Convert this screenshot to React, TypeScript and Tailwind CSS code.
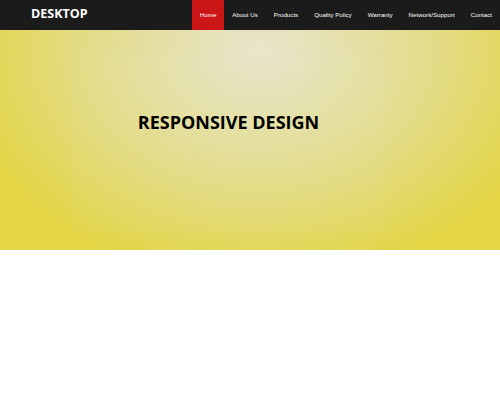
const navItems = [
  "Home",
  "About Us",
  "Products",
  "Quality Policy",
  "Warranty",
  "Network/Support",
  "Contact",
];

export default function App() {
  return (
    <div className="w-[500px] h-[400px] bg-white">
      <header className="flex h-[30px] items-stretch justify-between bg-[#1b1b1b]">
        <div
          className="pl-[31px] pt-[5px] text-[12.5px] font-bold text-white"
          style={{ fontFamily: '"Open Sans", sans-serif' }}
        >
          DESKTOP
        </div>
        <nav
          className="flex items-stretch text-[6.2px] text-white"
          style={{ fontFamily: '"Liberation Sans", Arial, sans-serif' }}
        >
          {navItems.map((item, i) => (
            <a
              key={item}
              className={
                "flex items-center px-[8px] " + (i === 0 ? "bg-[#cc1517] px-[7px]" : "")
              }
            >
              {item}
            </a>
          ))}
        </nav>
      </header>

      <section className="h-[220px] bg-[radial-gradient(ellipse_300px_230px_at_260px_20px,#e8e5cc_0%,#e3dc8c_55%,#e3d546_100%)] pt-[23px] pl-[72px]">
        <div className="flex h-[179px] w-[313px] justify-center bg-white/[0.03] pt-[60px]">
          <h1
            className="text-[18px] font-bold leading-none text-black"
            style={{ fontFamily: '"Open Sans", sans-serif' }}
          >
            RESPONSIVE DESIGN
          </h1>
        </div>
      </section>
    </div>
  );
}
